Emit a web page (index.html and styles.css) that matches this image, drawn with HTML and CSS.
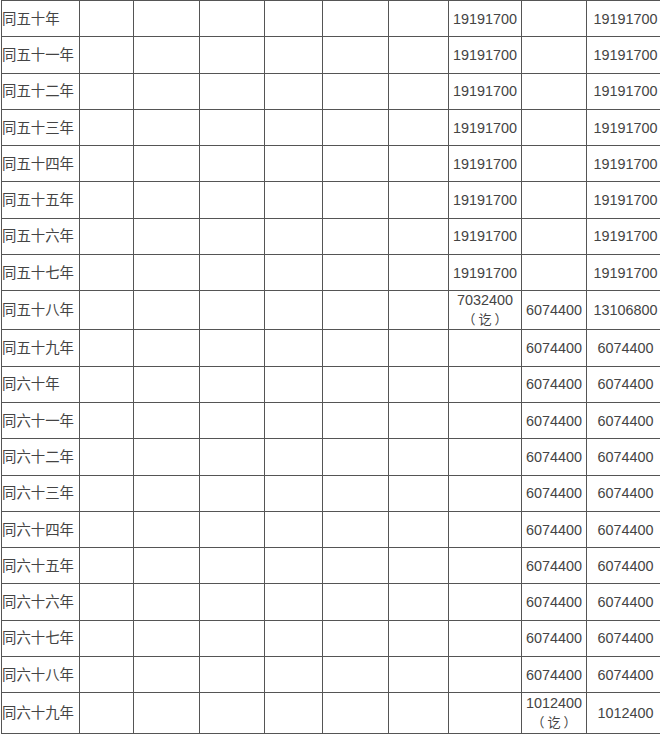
FILE: index.html
```html
<!DOCTYPE html>
<html lang="zh">
<head>
<meta charset="utf-8">
<link rel="stylesheet" href="styles.css">
</head>
<body>
<table class="ledger">
<colgroup>
<col class="c1"><col class="c2"><col class="c3"><col class="c4"><col class="c5"><col class="c6"><col class="c7"><col class="c8"><col class="c9"><col class="c10">
</colgroup>
<tbody>
<tr class="r"><td class="lbl">同五十年</td><td></td><td></td><td></td><td></td><td></td><td></td><td class="num">19191700</td><td></td><td class="num">19191700</td></tr>
<tr class="r"><td class="lbl">同五十一年</td><td></td><td></td><td></td><td></td><td></td><td></td><td class="num">19191700</td><td></td><td class="num">19191700</td></tr>
<tr class="r"><td class="lbl">同五十二年</td><td></td><td></td><td></td><td></td><td></td><td></td><td class="num">19191700</td><td></td><td class="num">19191700</td></tr>
<tr class="r"><td class="lbl">同五十三年</td><td></td><td></td><td></td><td></td><td></td><td></td><td class="num">19191700</td><td></td><td class="num">19191700</td></tr>
<tr class="r"><td class="lbl">同五十四年</td><td></td><td></td><td></td><td></td><td></td><td></td><td class="num">19191700</td><td></td><td class="num">19191700</td></tr>
<tr class="r"><td class="lbl">同五十五年</td><td></td><td></td><td></td><td></td><td></td><td></td><td class="num">19191700</td><td></td><td class="num">19191700</td></tr>
<tr class="r"><td class="lbl">同五十六年</td><td></td><td></td><td></td><td></td><td></td><td></td><td class="num">19191700</td><td></td><td class="num">19191700</td></tr>
<tr class="r"><td class="lbl">同五十七年</td><td></td><td></td><td></td><td></td><td></td><td></td><td class="num">19191700</td><td></td><td class="num">19191700</td></tr>
<tr class="r2"><td class="lbl">同五十八年</td><td></td><td></td><td></td><td></td><td></td><td></td><td class="num two">7032400<br><span class="note">（讫）</span></td><td class="num">6074400</td><td class="num">13106800</td></tr>
<tr class="r"><td class="lbl">同五十九年</td><td></td><td></td><td></td><td></td><td></td><td></td><td></td><td class="num">6074400</td><td class="num">6074400</td></tr>
<tr class="r"><td class="lbl">同六十年</td><td></td><td></td><td></td><td></td><td></td><td></td><td></td><td class="num">6074400</td><td class="num">6074400</td></tr>
<tr class="r"><td class="lbl">同六十一年</td><td></td><td></td><td></td><td></td><td></td><td></td><td></td><td class="num">6074400</td><td class="num">6074400</td></tr>
<tr class="r"><td class="lbl">同六十二年</td><td></td><td></td><td></td><td></td><td></td><td></td><td></td><td class="num">6074400</td><td class="num">6074400</td></tr>
<tr class="r"><td class="lbl">同六十三年</td><td></td><td></td><td></td><td></td><td></td><td></td><td></td><td class="num">6074400</td><td class="num">6074400</td></tr>
<tr class="r"><td class="lbl">同六十四年</td><td></td><td></td><td></td><td></td><td></td><td></td><td></td><td class="num">6074400</td><td class="num">6074400</td></tr>
<tr class="r"><td class="lbl">同六十五年</td><td></td><td></td><td></td><td></td><td></td><td></td><td></td><td class="num">6074400</td><td class="num">6074400</td></tr>
<tr class="r"><td class="lbl">同六十六年</td><td></td><td></td><td></td><td></td><td></td><td></td><td></td><td class="num">6074400</td><td class="num">6074400</td></tr>
<tr class="r"><td class="lbl">同六十七年</td><td></td><td></td><td></td><td></td><td></td><td></td><td></td><td class="num">6074400</td><td class="num">6074400</td></tr>
<tr class="r"><td class="lbl">同六十八年</td><td></td><td></td><td></td><td></td><td></td><td></td><td></td><td class="num">6074400</td><td class="num">6074400</td></tr>
<tr class="r3"><td class="lbl">同六十九年</td><td></td><td></td><td></td><td></td><td></td><td></td><td></td><td class="num two">1012400<br><span class="note">（讫）</span></td><td class="num">1012400</td></tr>
</tbody>
</table>
</body>
</html>
```

FILE: styles.css
```css
html, body {
  margin: 0;
  padding: 0;
  background: #ffffff;
  overflow: hidden;
}
body {
  width: 660px;
  height: 734px;
  font-family: "Liberation Sans", "Noto Sans CJK SC", sans-serif;
  color: #444;
}
.ledger {
  border-collapse: collapse;
  table-layout: fixed;
  width: 664px;
  margin-left: 1px;
  margin-top: 0;
}
.ledger td {
  border: 1px solid #555;
  padding: 0;
  font-size: 14.4px;
  line-height: 18px;
  vertical-align: middle;
  white-space: nowrap;
  overflow: hidden;
}
.c1 { width: 78px; }
.c2 { width: 54px; }
.c3 { width: 66px; }
.c4 { width: 65px; }
.c5 { width: 58px; }
.c6 { width: 66px; }
.c7 { width: 60px; }
.c8 { width: 73px; }
.c9 { width: 65px; }
.c10 { width: 78px; }
.r { height: 36.3px; }
.r2 { height: 39px; }
.r3 { height: 41px; }
.lbl {
  text-align: left;
  padding-left: 4px;
  font-size: 14px;
}
.num {
  text-align: center;
}
.ledger .two {
  line-height: 19px;
}
.note {
  font-size: 13px;
  letter-spacing: 3px;
  margin-right: -3px;
}
```
